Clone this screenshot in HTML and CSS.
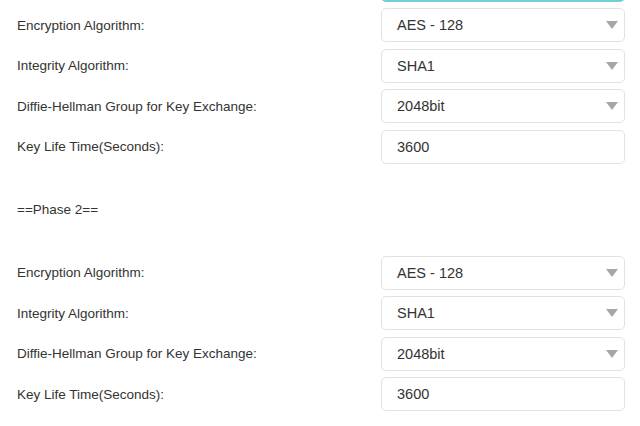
FILE: index.html
```html
<!DOCTYPE html>
<html lang="en">
<head>
  <meta charset="UTF-8" />
  <title>IPSec Policy</title>
  <link rel="stylesheet" href="styles.css">
</head>
<body>

  <div class="policy">
    <div class="row">
      <label></label>
      <input type="text" class="field active" value="">
    </div>

    <div class="row">
      <label>Encryption Algorithm:</label>
      <div class="select">AES - 128<span class="caret"></span></div>
    </div>
    <div class="row">
      <label>Integrity Algorithm:</label>
      <div class="select">SHA1<span class="caret"></span></div>
    </div>
    <div class="row">
      <label>Diffie-Hellman Group for Key Exchange:</label>
      <div class="select">2048bit<span class="caret"></span></div>
    </div>
    <div class="row">
      <label>Key Life Time(Seconds):</label>
      <input type="text" class="field" value="3600">
    </div>

    <p class="phase">==Phase 2==</p>

    <div class="row">
      <label>Encryption Algorithm:</label>
      <div class="select">AES - 128<span class="caret"></span></div>
    </div>
    <div class="row">
      <label>Integrity Algorithm:</label>
      <div class="select">SHA1<span class="caret"></span></div>
    </div>
    <div class="row">
      <label>Diffie-Hellman Group for Key Exchange:</label>
      <div class="select">2048bit<span class="caret"></span></div>
    </div>
    <div class="row">
      <label>Key Life Time(Seconds):</label>
      <input type="text" class="field" value="3600">
    </div>
  </div>

</body>
</html>
```

FILE: styles.css
```css
* {
  box-sizing: border-box;
}

body {
  font-family: "Liberation Sans", Arial, sans-serif;
  margin: 0;
  padding: 0;
  background: #fff;
  color: #333;
}

.policy {
  margin-top: -32.5px;
  padding-left: 17px;
  width: 625px;
  display: flex;
  flex-direction: column;
  gap: 6.5px;
}

.row {
  display: flex;
  align-items: center;
  height: 34px;
}

.row label {
  width: 364px;
  font-size: 13.5px;
}

.field,
.select {
  width: 244px;
  height: 34px;
  border: 1px solid #e2e2e2;
  border-radius: 5px;
  padding: 0 15px;
  font-family: inherit;
  font-size: 14.5px;
  color: #333;
  background: #fff;
}

.field.active {
  border: 2px solid #72d0d4;
}

.select {
  display: flex;
  align-items: center;
  justify-content: space-between;
  padding-right: 6px;
}

.caret {
  width: 0;
  height: 0;
  border-left: 6px solid transparent;
  border-right: 6px solid transparent;
  border-top: 8px solid #a6a6a6;
}

.phase {
  margin: 0;
  height: 79px;
  line-height: 79px;
  font-size: 13.5px;
}
```
